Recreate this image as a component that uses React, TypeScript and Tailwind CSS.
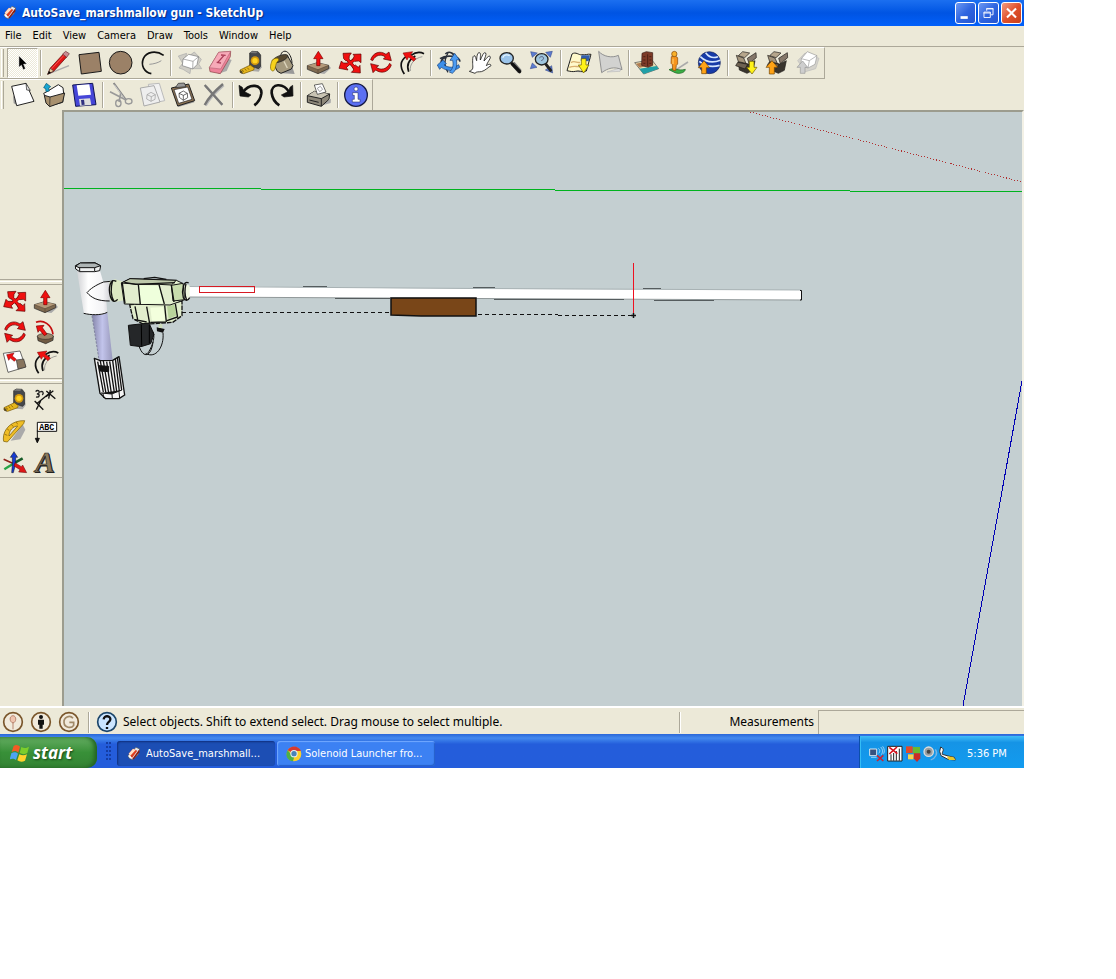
import React from "react";

type Box = { x: number; y: number; children: React.ReactNode };

/* Icons are drawn on a fine grid, three units to the pixel. */
function Glyph({ x, y, children }: Box) {
  return (
    <svg viewBox={`${x} ${y} 93 90`} className="h-[30px] w-[31px]" fill="none" strokeLinejoin="round" aria-hidden="true">
      {children}
    </svg>
  );
}

function Tool({ label, pressed, children }: { label: string; pressed?: boolean; children: React.ReactNode }) {
  return (
    <button
      type="button"
      aria-label={label}
      aria-pressed={pressed}
      className={
        pressed
          ? "flex h-[30px] w-[31px] shrink-0 items-center justify-center border border-t-[#aca899] border-l-[#aca899] border-r-white border-b-white bg-[#f6f5ee] bg-[repeating-conic-gradient(#ffffff_0_25%,#ece9d8_0_50%)] bg-[length:2px_2px]"
          : "h-[30px] w-[31px] shrink-0"
      }
    >
      {children}
    </button>
  );
}

function Sep() {
  return (
    <div className="flex w-[6px] shrink-0 justify-center py-[2px]">
      <div className="w-[2px] border-l border-[#aca899] bg-white" />
    </div>
  );
}

function Grip() {
  return <div className="my-px mr-[3px] ml-px w-[3px] shrink-0 border-l border-white border-r border-r-[#aca899]" />;
}

const red = "#f01010";
const ink = "#1a1a1a";

const MoveShape = ({ dx, dy }: { dx: number; dy: number }) => (
  <g transform={`translate(${dx} ${dy})`}>
    <path d="M-17-18 15 19M19-15-18 12" stroke="#5a0000" strokeWidth="10" />
    <g stroke="#5a0000" strokeWidth="2" fill={red}>
      <path d="M-23-28 2-29-4-20-5-10-15-6-21-12Z" />
      <path d="M31-26 31 0 24-5 13-4 7-12 11-20 7-25Z" />
      <path d="M29 31 2 29 9 22 6 13 14 7 23 14 28 8Z" />
      <path d="M-35 17-28-5-22 1-11 1-7 9-13 14-8 22Z" />
    </g>
    <path d="M-14-15 13 16M16-12-15 10" stroke={red} strokeWidth="7" />
  </g>
);

const RotateShape = ({ dx, dy }: { dx: number; dy: number }) => (
  <g transform={`translate(${dx} ${dy})`} stroke="#5a0000" strokeWidth="2" fill={red}>
    <path d="M-31-7C-24-28-3-36 15-23L24-30 31-4 7-9 13-15C0-25-17-21-25-4Z" />
    <path d="M31 9C24 30 2 37-16 24L-24 32-31 5-7 11-14 16C-1 26 18 22 26 4Z" />
  </g>
);

const OffsetShape = ({ dx, dy }: { dx: number; dy: number }) => (
  <g transform={`translate(${dx} ${dy})`}>
    <path d="M-23 36C-38 14-35-5-17-17M-10 29C-17 10-9-7 10-18M-3-20C12-31 23-32 36-25" stroke="#111" strokeWidth="5" />
    <path d="M-5 27C-8 7 7-12 31-16" stroke="#777" strokeWidth="2" />
    <path d="M-27-27 2-31-4-22 12-10 5-2-10-15-15-6Z" fill={red} stroke="#700" strokeWidth="1.5" />
  </g>
);

const PushShape = ({ dx, dy }: { dx: number; dy: number }) => (
  <g transform={`translate(${dx} ${dy})`}>
    <path d="M0 31 18 34 38 16 30 8Z" fill="#aaa" />
    <path d="M-33 9-3 0 31 8 31 18-1 33-33 20Z" fill="#7f6a50" stroke="#222" strokeWidth="2" />
    <path d="M-33 9-3 0 31 8-1 21Z" fill="#b49a7a" />
    <path d="M-1 21V33M-33 9-1 21 31 8" stroke="#4a3b2a" strokeWidth="1.5" />
    <path d="M0-34 14-12H5V9H-5V-12H-14Z" fill={red} stroke="#700" strokeWidth="2" />
  </g>
);

const TapeShape = ({ dx, dy }: { dx: number; dy: number }) => (
  <g transform={`translate(${dx} ${dy})`}>
    <path d="M4 25 25 27 34 14 31 4Z" fill="#aaa" />
    <path d="M-2-29 6-34 23-33 31-23V11L25 18-2 10Z" fill="#46484c" stroke="#222" strokeWidth="2" />
    <path d="M-2-29 6-34 23-33 17-28Z" fill="#777" />
    <circle cx="14" cy="-6" r="13" fill="#d49a10" />
    <circle cx="14" cy="-6" r="8" fill="#ffd322" />
    <path d="M-31 22 0 7 12 16 10 22-20 33-31 29Z" fill="#e6b61c" stroke="#705000" strokeWidth="2" />
    <path d="M-25 22-19 27M-17 18-12 24M-9 15-4 21" stroke="#634800" strokeWidth="2" />
    <path d="M-31 22-24 26-23 34-31 30Z" fill="#554a2a" />
  </g>
);

const CrateShape = ({ dx, dy }: { dx: number; dy: number }) => (
  <g transform={`translate(${dx} ${dy})`} stroke="#1d1a16" strokeWidth="2">
    <path d="M-24-3 6 4 26-6 20 23 2 32-21 22Z" fill="#39342d" />
    <path d="M-24-3-30-22-8-14-1 2Z" fill="#a3947c" />
    <path d="M-24-21-11-33 10-29-5-15Z" fill="#b6a68c" />
    <path d="M3-13 29-30 30-15 8 3Z" fill="#85776a" />
    <path d="M-26-1-32 9-4 19 4 5Z" fill="#6e6252" />
  </g>
);

const Book = () => (
  <svg viewBox="0 0 48 48" className="h-4 w-4 shrink-0" aria-hidden="true">
    <path d="M6 29 30 4l11 5-5 17-17 15-9-4Z" fill="#e5edf5" stroke="#555" strokeWidth="2" />
    <path d="M8 23 21 8l13 6-16 22Z" fill="#dc3d1e" />
    <path d="M8 23 21 8l8 4-16 17Z" fill="#ffe1c8" />
    <path d="M18 40 40 10v9L24 39Z" fill="#8a1e12" />
    <path d="M8 29l8 7" stroke="#fff" strokeWidth="4" />
  </svg>
);

function TitleBar() {
  const base = "flex h-[22px] w-[21px] items-center justify-center rounded-[3px] border border-white";
  return (
    <header className="flex h-[26px] items-center bg-linear-to-b from-[#1b6ff0] via-[#0054e3] to-[#0260fa] pr-[2px] pl-[2px]">
      <Book />
      <h1 className="ml-[4px] flex-1 truncate font-['DejaVu_Sans_Condensed','DejaVu_Sans',sans-serif] text-[12px] leading-[18px] font-bold text-white [text-shadow:1px_1px_1px_#0b2a80]">
        AutoSave_marshmallow gun - SketchUp
      </h1>
      <div className="flex gap-[2px]">
        <button type="button" aria-label="Minimize" className={base + " bg-linear-to-br from-[#6d98f2] via-[#2f65e0] to-[#2455d0]"}>
          <svg viewBox="0 0 21 21" className="h-5 w-5"><path d="M5 14h8v3H5z" fill="#fff" /></svg>
        </button>
        <button type="button" aria-label="Restore" className={base + " bg-linear-to-br from-[#6d98f2] via-[#2f65e0] to-[#2455d0]"}>
          <svg viewBox="0 0 21 21" className="h-5 w-5" fill="none" stroke="#fff">
            <path d="M8.500 8V5.500h7v7H13M8 6h8" />
            <path d="M5.500 9.500h7v6h-7zM5 10.500h8" />
          </svg>
        </button>
        <button type="button" aria-label="Close" className={base + " bg-linear-to-br from-[#f09a80] via-[#e0512c] to-[#c8401c]"}>
          <svg viewBox="0 0 21 21" className="h-5 w-5"><path d="M5.500 5.500l10 10M15.500 5.500l-10 10" stroke="#fff" strokeWidth="2.300" /></svg>
        </button>
      </div>
    </header>
  );
}

const menus = ["File", "Edit", "View", "Camera", "Draw", "Tools", "Window", "Help"];

function MenuBar() {
  return (
    <nav className="flex h-5 items-center gap-[11px] pl-[5px]">
      {menus.map((m) => (
        <button key={m} type="button" className="font-['DejaVu_Sans_Condensed','DejaVu_Sans',sans-serif] text-[11px] leading-[16px] text-black">
          {m}
        </button>
      ))}
    </nav>
  );
}

function MainToolbar() {
  return (
    <div className="flex">
      <div role="toolbar" aria-label="Getting started" className="flex h-8 border-t border-b border-t-white border-b-[#aca899] border-r border-r-[#aca899]">
        <Grip />
        <Tool label="Select" pressed>
          <Glyph x={21} y={144}><path d="M56 166V203L64 196 70 211 77 207 71 193 82 192Z" fill="#000" stroke="#fff" strokeWidth="1.500" /></Glyph>
        </Tool>
        <Sep />
        <Tool label="Line">
          <Glyph x={132} y={144}>
            <path d="M147 221 207 197" stroke="#aaa" strokeWidth="4" />
            <path d="M143 223 151 204 190 162 200 171 161 214Z" fill="#e01515" stroke="#500" strokeWidth="2" />
            <path d="M154 207 193 165" stroke="#ff7777" strokeWidth="2" />
            <path d="M143 223 151 205 161 213Z" fill="#e6c79c" stroke="#222" strokeWidth="1.500" />
            <path d="M143 223 147 213 153 218Z" fill="#000" />
            <path d="M188 162 197 154 208 161 200 172Z" fill="#c98b92" stroke="#633" strokeWidth="2" />
          </Glyph>
        </Tool>
        <Tool label="Rectangle">
          <Glyph x={225} y={144}><path d="M237 164 297 157 304 214 244 222Z" fill="#9b8167" stroke={ink} strokeWidth="3" /></Glyph>
        </Tool>
        <Tool label="Circle">
          <Glyph x={318} y={144}><circle cx="362" cy="188" r="34" fill="#9b8167" stroke={ink} strokeWidth="3" /></Glyph>
        </Tool>
        <Tool label="Arc">
          <Glyph x={411} y={144}>
            <path d="M491 166C468 150 439 155 430 176 422 196 432 216 454 221" stroke="#111" strokeWidth="5" />
            <path d="M448 193C462 192 475 188 484 182" stroke="#999" strokeWidth="3" />
          </Glyph>
        </Tool>
        <Sep />
        <Tool label="Make Component">
          <Glyph x={522} y={144}>
            <path d="M535 168 560 160 556 176 583 156 604 178 596 192 605 206 572 206 570 221 549 208 537 204 548 190Z" fill="#cfcdc5" stroke="#aaa" strokeWidth="2" />
            <path d="M549 177 566 163 596 170 591 194 578 207 547 197Z" fill="#fff" stroke="#777" strokeWidth="2" />
            <path d="M549 177 579 184 596 170M579 184 578 207" stroke="#888" strokeWidth="2" />
          </Glyph>
        </Tool>
        <Tool label="Eraser">
          <Glyph x={615} y={144}>
            <path d="M653 222 680 213 695 180 680 175Z" fill="#aaa" />
            <path d="M628 203 656 157 692 154 691 170 661 221 630 215Z" fill="#ee8299" stroke="#844" strokeWidth="2" />
            <path d="M628 203 656 157 692 154 662 207Z" fill="#f7aab8" stroke="#a65868" strokeWidth="1.500" />
            <path d="M653 188 672 166M663 165 677 166M650 187 663 189" stroke="#aa3d56" strokeWidth="4" />
          </Glyph>
        </Tool>
        <Tool label="Tape Measure"><Glyph x={708} y={144}><TapeShape dx={751} dy={188} /></Glyph></Tool>
        <Tool label="Paint Bucket">
          <Glyph x={801} y={144}>
            <path d="M835 219 884 222 876 198Z" fill="#999" />
            <path d="M817 184 862 166 879 197 874 207 843 220 832 214Z" fill="#a59a7e" stroke="#222" strokeWidth="3" />
            <path d="M842 170C842 152 858 149 866 160 873 169 876 180 876 190" stroke="#222" strokeWidth="3" />
            <ellipse cx="840" cy="176" rx="25" ry="9" transform="rotate(-22 840 176)" fill="#554832" stroke="#222" strokeWidth="2" />
            <path d="M817 180C829 170 842 175 833 184 824 192 829 213 818 213 808 210 811 193 817 180Z" fill="#f7d21c" stroke="#7d6400" strokeWidth="2" />
            <path d="M852 184 862 204" stroke="#ddd5bd" strokeWidth="4" />
          </Glyph>
        </Tool>
        <Sep />
        <Tool label="Push/Pull"><Glyph x={42} y={12}><PushShape dx={85} dy={56} /></Glyph></Tool>
        <Tool label="Move"><Glyph x={135} y={12}><MoveShape dx={182} dy={56} /></Glyph></Tool>
        <Tool label="Rotate"><Glyph x={228} y={12}><RotateShape dx={273} dy={54} /></Glyph></Tool>
        <Tool label="Offset"><Glyph x={321} y={12}><OffsetShape dx={366} dy={54} /></Glyph></Tool>
        <Sep />
        <Tool label="Orbit">
          <Glyph x={432} y={12}>
            <path d="M466 30C478 18 494 29 497 44M450 44C469 31 508 35 510 53M458 64C449 54 455 41 470 40" stroke="#2a2f39" strokeWidth="5" />
            <path d="M474 27C462 46 462 67 474 85" stroke="#2a2f39" strokeWidth="4" />
            <path d="M442 63 459 48 469 59 462 63C478 73 494 71 506 62L509 70C493 83 470 82 454 70L449 76Z" stroke="#123d79" strokeWidth="2" fill="#3c8ee8" />
            <path d="M494 28 508 47 499 48C503 65 497 81 487 88L478 84C489 75 491 63 488 49L480 49Z" fill="#4d9cf2" stroke="#123d79" strokeWidth="2" />
          </Glyph>
        </Tool>
        <Tool label="Pan">
          <Glyph x={525} y={12}>
            <path d="M538 82C552 77 548 69 548 58 548 48 547 37 552 35 558 35 557 44 560 50 560 39 562 25 568 26 574 26 570 41 571 48 576 39 580 22 587 27 591 31 582 45 582 51 589 44 595 34 600 37 605 41 592 54 589 65 597 59 603 60 603 65 595 69 586 80 574 83 566 84 559 82 555 88Z" fill="#fff" stroke={ink} strokeWidth="2.500" />
          </Glyph>
        </Tool>
        <Tool label="Zoom">
          <Glyph x={618} y={12}>
            <path d="M668 58 690 83" stroke="#777" strokeWidth="14" />
            <path d="M666 59 689 83" stroke="#111" strokeWidth="10" strokeLinecap="round" />
            <ellipse cx="650" cy="43" rx="20" ry="17" fill="#9bc4ea" stroke="#222" strokeWidth="4" />
            <path d="M638 41C642 31 653 31 659 35" stroke="#e3f4ff" strokeWidth="4" />
          </Glyph>
        </Tool>
        <Tool label="Zoom Extents">
          <Glyph x={711} y={12}>
            <g fill="#5b7bd0" stroke="#293d80" strokeWidth="1.500">
              <path d="M722 23 742 27 727 40Z" /><path d="M787 22 767 25 781 40Z" /><path d="M721 74 741 70 727 57Z" /><path d="M766 78 788 87 785 65Z" />
            </g>
            <path d="M768 61 782 79" stroke="#222" strokeWidth="9" strokeLinecap="round" />
            <ellipse cx="755" cy="46" rx="19" ry="17" fill="#9fc6de" stroke="#222" strokeWidth="4" />
            <path d="M748 42C753 34 765 39 759 46L754 51" stroke="#557" strokeWidth="3" />
          </Glyph>
        </Tool>
        <Sep />
        <Tool label="Get Current View">
          <Glyph x={12} y={12}>
            <path d="M31 82 72 86 94 40Z" fill="#bbb" />
            <path d="M36 30C48 22 56 34 65 32 76 34 83 29 93 31L79 81C66 86 57 78 46 82 38 84 30 82 21 80Z" fill="#fff9cb" stroke="#222" strokeWidth="3" />
            <path d="M64 34 90 34 86 52 62 50Z" fill="#315dac" />
            <path d="M33 56C43 48 51 58 60 55M28 70C43 64 54 70 61 67" stroke="#d9b070" strokeWidth="4" />
            <path d="M64 44H78V63H87L71 87 55 63H64Z" fill="#fff219" stroke="#655800" strokeWidth="2" />
          </Glyph>
        </Tool>
        <Tool label="Toggle Terrain">
          <Glyph x={105} y={12}>
            <path d="M141 84 180 82 186 70Z" fill="#ddd" stroke="#bbb" strokeWidth="2" />
            <path d="M116 22C130 38 156 43 175 34L186 77C162 66 143 73 125 86Z" fill="#d2d2d0" stroke="#919191" strokeWidth="3" />
          </Glyph>
        </Tool>
        <Sep />
        <Tool label="Add New Building">
          <Glyph x={216} y={12}>
            <path d="M224 56 275 47 296 74 251 90Z" fill="#eee1b4" stroke="#444" strokeWidth="2" />
            <path d="M238 74 290 66 296 74 251 90Z" fill="#21a0a7" />
            <path d="M228 59 249 55 261 66 239 71Z" fill="#b07c51" />
            <path d="M246 28 259 23 278 26V64L264 70 245 64Z" fill="#7d3b28" stroke="#371a13" strokeWidth="2" />
            <path d="M263 31V66M250 38h6m12 0h6m-24 10h6m12 0h6m-24 10h6m12 0h6" stroke="#4d2014" strokeWidth="3" />
          </Glyph>
        </Tool>
        <Tool label="Photo Textures">
          <Glyph x={309} y={12}>
            <path d="M350 76 384 54" stroke="#aaa" strokeWidth="5" />
            <path d="M327 77C343 69 352 82 376 76 375 87 357 91 345 86Z" fill="#3aae44" stroke="#195d23" strokeWidth="2" />
            <path d="M334 38C342 35 352 37 353 42L353 60 349 64 347 80 338 78 337 62 333 58Z" fill="#f6941e" stroke="#80440a" strokeWidth="2" />
            <circle cx="343" cy="30" r="8" fill="#f9b129" stroke="#80440a" strokeWidth="2" />
            <path d="M339 44V60" stroke="#ffd372" strokeWidth="3" />
          </Glyph>
        </Tool>
        <Tool label="Preview in Google Earth">
          <Glyph x={402} y={12}>
            <circle cx="448" cy="56" r="33" fill="#173ba8" stroke="#172355" strokeWidth="2" />
            <path d="M418 52C437 68 459 70 479 64M421 38C438 55 460 57 481 49M437 26C448 41 461 43 474 38" stroke="#d6e7ff" strokeWidth="5" />
            <path d="M432 50 449 71H439V89H425V71H415Z" fill="#ffa316" stroke="#6e4100" strokeWidth="2" />
          </Glyph>
        </Tool>
        <Sep />
        <Tool label="Get Models">
          <Glyph x={513} y={12}><CrateShape dx={559} dy={56} /><path d="M568 52H582V70H591L576 90 560 70H568Z" fill="#fff219" stroke="#655800" strokeWidth="2" /></Glyph>
        </Tool>
        <Tool label="Share Model">
          <Glyph x={606} y={12}><CrateShape dx={653} dy={56} /><path d="M636 50 653 70H643V90H628V70H618Z" fill="#ffa316" stroke="#6e4100" strokeWidth="2" /></Glyph>
        </Tool>
        <Tool label="Share Component">
          <Glyph x={699} y={12}>
            <path d="M713 50 735 27 777 43 767 74 736 83Z" fill="#d5d3cc" stroke="#bbb" strokeWidth="2" />
            <path d="M724 44 742 23 771 35 765 61 744 72 723 65Z" fill="#fff" stroke="#999" strokeWidth="2" />
            <path d="M724 44 748 50 771 35M748 50 744 72" stroke="#999" strokeWidth="2" />
            <path d="M728 51 743 70H735V88H721V70H711Z" fill="#cecece" stroke="#999" strokeWidth="2" />
          </Glyph>
        </Tool>
      </div>
    </div>
  );
}

function StandardToolbar() {
  return (
    <div className="flex">
      <div role="toolbar" aria-label="Standard" className="flex h-8 border-t border-r border-t-white border-r-[#aca899] pb-px">
        <Grip />
        <Tool label="New">
          <Glyph x={21} y={240}>
            <path d="M39 286 57 317 41 310Z" fill="#999" />
            <path d="M35 259 78 250 102 304 50 317Z" fill="#fff" stroke="#222" strokeWidth="3" />
            <path d="M78 250 80 270 91 271Z" fill="#ddd" stroke="#222" strokeWidth="2" />
          </Glyph>
        </Tool>
        <Tool label="Open">
          <Glyph x={114} y={240}>
            <path d="M131 280 139 276 175 254 189 263 191 281 188 307 147 318Z" fill="#fff" stroke="#222" strokeWidth="3" />
            <path d="M133 286 150 291 194 279 188 306 149 320 138 309Z" fill="#a7906e" stroke="#222" strokeWidth="3" />
            <path d="M150 291 149 319" stroke="#222" strokeWidth="2" />
            <path d="M131 263 139 250 152 260 146 264 148 273 138 275 137 266Z" fill="#17a5d1" stroke="#07506b" strokeWidth="2" />
          </Glyph>
        </Tool>
        <Tool label="Save">
          <Glyph x={207} y={240}>
            <path d="M218 255 278 250 288 314 227 319Z" fill="#4646d8" stroke="#111555" strokeWidth="3" />
            <path d="M230 256 268 253 273 284 235 287Z" fill="#fff" />
            <path d="M237 297 270 295 274 315 240 317Z" fill="#ddd" />
            <path d="M243 300 252 299 254 314 245 315Z" fill="#303080" />
          </Glyph>
        </Tool>
        <Sep />
        <Tool label="Cut">
          <Glyph x={318} y={240}>
            <path d="M341 249 378 300" stroke="#888" strokeWidth="6" />
            <path d="M343 254 374 297" stroke="#eee" strokeWidth="2" />
            <path d="M330 275 378 300M362 280 357 306" stroke="#999" strokeWidth="5" />
            <ellipse cx="386" cy="304" rx="10" ry="8" stroke="#999" strokeWidth="4" />
            <ellipse cx="355" cy="310" rx="8" ry="10" stroke="#999" strokeWidth="4" />
          </Glyph>
        </Tool>
        <Tool label="Copy">
          <Glyph x={411} y={240}>
            <path d="M445 253 478 250 494 302 459 309Z" fill="#f1f1f1" stroke="#bbb" strokeWidth="3" />
            <path d="M421 264 462 257 480 306 432 318Z" fill="#eee" stroke="#aaa" strokeWidth="3" />
            <path d="M441 284 453 277 466 284 465 298 453 304 440 297ZM441 284 454 290 466 284M454 290 453 304" stroke="#999" strokeWidth="2" />
          </Glyph>
        </Tool>
        <Tool label="Paste">
          <Glyph x={504} y={240}>
            <path d="M526 295 535 321 583 307 577 291Z" fill="#999" />
            <path d="M514 264 566 252 584 302 533 318Z" fill="#8b7253" stroke="#222" strokeWidth="3" />
            <path d="M522 269 563 261 576 298 536 310Z" fill="#fff" stroke="#222" strokeWidth="2" />
            <path d="M526 263 535 250 553 249 558 260Z" fill="#999" stroke="#222" strokeWidth="2" />
            <path d="M537 280 550 273 562 280 563 293 550 301 538 292ZM537 280 550 286 562 280M550 286 550 301" stroke="#222" strokeWidth="2" />
          </Glyph>
        </Tool>
        <Tool label="Delete">
          <Glyph x={597} y={240}>
            <path d="M618 259 667 315M671 256C651 273 631 291 617 317" stroke="#bbb" strokeWidth="7" />
            <path d="M614 255 667 314M669 252C648 270 628 288 614 315" stroke="#777" strokeWidth="7" />
          </Glyph>
        </Tool>
        <Sep />
        <Tool label="Undo">
          <Glyph x={708} y={240}>
            <path d="M729 277C748 248 787 253 784 281 782 296 774 308 763 316" stroke="#111" strokeWidth="8" />
            <path d="M717 256 727 262 731 274 753 285 745 291 720 288Z" fill="#111" stroke="#111" strokeWidth="2" />
          </Glyph>
        </Tool>
        <Tool label="Redo">
          <Glyph x={801} y={240}>
            <path d="M868 277C849 246 813 251 815 279 817 296 825 308 838 316" stroke="#111" strokeWidth="8" />
            <path d="M878 256 870 262 866 274 844 285 852 291 879 288Z" fill="#111" stroke="#111" strokeWidth="2" />
          </Glyph>
        </Tool>
        <Sep />
        <Tool label="Print">
          <Glyph x={42} y={108}>
            <path d="M90 186 122 177 123 164Z" fill="#aaa" />
            <path d="M52 155 73 142 119 150 117 166 94 187 52 175Z" fill="#8d8779" stroke="#222" strokeWidth="3" />
            <path d="M53 155 73 142 118 150 94 164Z" fill="#c9c4b4" />
            <path d="M73 123 97 119 108 144 82 151Z" fill="#fff" stroke="#222" strokeWidth="2" />
            <path d="M52 155 94 164 119 150M94 164V186M58 168 86 175" stroke="#222" strokeWidth="3" />
            <path d="M82 133 91 127 98 136 89 143Z" stroke="#777" strokeWidth="2" />
          </Glyph>
        </Tool>
        <Sep />
        <Tool label="Model Info">
          <Glyph x={153} y={108}>
            <circle cx="198" cy="153" r="34" fill="#5c70f2" stroke="#161a44" strokeWidth="4" />
            <circle cx="198" cy="135" r="6" fill="#fff" stroke="#162055" strokeWidth="1.500" />
            <path d="M188 146H204V166H210V174H187V166H193V154H188Z" fill="#fff" stroke="#162055" strokeWidth="1.500" />
          </Glyph>
        </Tool>
      </div>
    </div>
  );
}

function SideGrip() {
  return (
    <div className="h-[6px] shrink-0 border-t border-b border-[#aca899] bg-[#ece9d8] py-px">
      <div className="h-px bg-white" />
    </div>
  );
}

function SideBar() {
  return (
    <aside className="flex w-16 shrink-0 flex-col border-r-2 border-r-[#9c9c8e] pt-[169px]">
      <SideGrip />
      <div role="toolbar" aria-label="Modify" className="grid auto-rows-[31px] grid-cols-2 place-items-center">
        <Tool label="Move copy"><Glyph x={0} y={33}><MoveShape dx={46} dy={78} /></Glyph></Tool>
        <Tool label="Push Pull face"><Glyph x={93} y={33}><PushShape dx={136} dy={80} /></Glyph></Tool>
        <Tool label="Rotate entity"><Glyph x={0} y={126}><RotateShape dx={45} dy={170} /></Glyph></Tool>
        <Tool label="Follow Me">
          <Glyph x={93} y={126}>
            <path d="M112 183 136 175 160 183 159 196 137 206 114 197Z" fill="#705a42" stroke="#222" strokeWidth="2" />
            <ellipse cx="136" cy="184" rx="24" ry="9" fill="#9b8468" stroke="#222" strokeWidth="1.500" />
            <path d="M108 142C129 133 155 147 159 178" stroke="#c40e0e" strokeWidth="5" />
            <path d="M109 153 132 151 127 158 141 177 133 182 119 165 114 172Z" fill={red} stroke="#700" strokeWidth="2" />
          </Glyph>
        </Tool>
        <Tool label="Scale">
          <Glyph x={0} y={219}>
            <path d="M10 235 60 228 77 276 24 292Z" fill="#fff" stroke="#222" strokeWidth="2" />
            <path d="M49 255 71 252 78 276 54 282Z" fill="#87745d" stroke="#333" strokeWidth="2" />
            <path d="M20 239 42 234 37 243 49 253 43 259 31 249 26 256Z" fill={red} stroke="#700" strokeWidth="1.500" />
          </Glyph>
        </Tool>
        <Tool label="Offset edges"><Glyph x={93} y={219}><OffsetShape dx={139} dy={259} /></Glyph></Tool>
      </div>
      <SideGrip />
      <div role="toolbar" aria-label="Construction" className="grid auto-rows-[31px] grid-cols-2 place-items-center border-b border-[#aca899]">
        <Tool label="Tape"><Glyph x={0} y={330}><TapeShape dx={43} dy={376} /></Glyph></Tool>
        <Tool label="Dimension">
          <Glyph x={93} y={330}>
            <path d="M110 386 153 351M104 378 130 404M109 404 122 378M139 348 166 371M151 345 146 371M138 365 160 347" stroke="#111" strokeWidth="4" />
            <path d="M107 350C112 343 120 348 117 354L112 357C120 357 120 368 108 366M120 351C128 347 133 353 127 360" stroke="#222" strokeWidth="4" />
          </Glyph>
        </Tool>
        <Tool label="Protractor">
          <Glyph x={0} y={420}>
            <path d="M32 494 61 490 76 461 68 445Z" fill="#aaa" />
            <path d="M10 489C9 459 36 432 74 434L71 443 22 498 11 496Z" fill="#efbd25" stroke="#705500" strokeWidth="2" />
            <path d="M27 480C27 463 39 451 53 450Z" fill="#e5dfcf" stroke="#705500" strokeWidth="2" />
            <path d="M14 475 22 478M21 458 28 464M34 445 40 452M49 438 53 445" stroke="#805800" strokeWidth="2" />
          </Glyph>
        </Tool>
        <Tool label="Text">
          <Glyph x={93} y={420}>
            <path d="M112 439H170V466H112Z" fill="#fff" stroke="#111" strokeWidth="3" />
            <path d="M112 464V499M106 487 112 500 118 487Z" fill="#111" stroke="#111" strokeWidth="3" />
            <text x="118" y="461" className="fill-black font-['Liberation_Mono',monospace] text-[25px] font-bold">ABC</text>
          </Glyph>
        </Tool>
        <Tool label="Axes">
          <Glyph x={0} y={513}>
            <path d="M41 563 11 550" stroke="#8d1f17" strokeWidth="5" />
            <path d="M41 562 68 547" stroke="#145a26" strokeWidth="8" />
            <path d="M42 562 13 580" stroke="#28a547" strokeWidth="7" />
            <path d="M37 565V544H31L42 527 53 544H47V564L40 590H35Z" fill="#183bd0" stroke="#111" strokeWidth="1.500" />
            <path d="M45 560 64 572 68 567 80 590 56 588 60 581 42 570Z" fill="#df1717" stroke="#511" strokeWidth="1.500" />
          </Glyph>
        </Tool>
        <Tool label="3D Text">
          <Glyph x={93} y={513}>
            <g className="font-['Liberation_Serif',serif] text-[88px] font-bold italic">
              <text x="109" y="591" fill="#222">A</text>
              <text x="106" y="588" fill="#8d7a5c" stroke="#222" strokeWidth="2">A</text>
            </g>
          </Glyph>
        </Tool>
      </div>
    </aside>
  );
}

function Scene() {
  return (
    <main className="min-w-0 flex-1 border-r-2 border-t-2 border-t-[#9c9c8e] border-r-[#f3f1e6] bg-[#c4cfd1]">
      <svg viewBox="64 112 958 594" className="block w-full" fill="none" role="img" aria-label="Marshmallow gun model">
        <g shapeRendering="crispEdges">
          <path d="M64 188.500H261M261 189.500H555M555 190.500H850M850 191.500H1022" stroke="#00b31e" />
          <path d="M750 112 1022 182" stroke="#b03030" strokeDasharray="1 2" />
          <path d="M1022 381 963 706" stroke="#0000b4" />
        </g>
        <path d="M188 286 480 289 801 290V300L480 299 188 297Z" fill="#fff" />
        <path d="M188 286.500 480 288.500 801 290" stroke="#a8b2b4" />
        <path d="M188 297 480 298.500 801 300" stroke="#909899" />
        <path d="M303 286.500h24m146 1h22m148 1h18M335 298.500h55m104 1h130m30 1h60" stroke="#555c5e" shapeRendering="crispEdges" />
        <path d="M800 290.500H801.500V300H800" stroke="#111" />
        <path d="M182 312.500H392M478 314.500H558M558 315.500H632" stroke="#111" strokeDasharray="4 3" shapeRendering="crispEdges" />
        <path d="M391 298H476V316H421L391 315Z" fill="#794618" stroke="#111" strokeWidth="1.500" />
        <rect x="633" y="263" width="1" height="52" fill="#ee1020" />
        <path d="M631 315.500h5M633.500 313v5" stroke="#111" strokeWidth="1.500" />
        <path d="M199.500 286.500h55v6h-55z" stroke="#d71922" shapeRendering="crispEdges" />

        <g transform="translate(64 250) scale(.333333)" strokeLinejoin="round">
          <linearGradient id="tube"><stop stopColor="#8585aa" /><stop offset=".5" stopColor="#c2c4eb" /><stop offset="1" stopColor="#9999bb" /></linearGradient>
          <linearGradient id="pvc"><stop stopColor="#d1d2d5" /><stop offset=".3" stopColor="#fff" /><stop offset=".7" stopColor="#f3f3f5" /><stop offset="1" stopColor="#bcbcc3" /></linearGradient>
          <path d="M84 194 130 188 146 332 105 330Z" fill="url(#tube)" />
          <path d="M84 198 105 330" stroke="#666688" strokeWidth="2" strokeDasharray="7 4" />
          <path d="M91 325 109 332 146 331 165 320 182 435 165 446 125 446 108 430Z" fill="#f4f4f4" stroke="#111" strokeWidth="4" />
          <path d="M101 335 118 426M109 333 126 430M118 333 134 429M128 335 142 429M137 334 151 427M146 332 158 425M154 326 166 424M160 322 173 420" stroke="#111" strokeWidth="4" />
          <path d="M105 347 134 349V365L107 363ZM111 429 143 432 174 420M117 430 119 444M144 432 145 446M165 425 167 444" fill="#111" stroke="#111" strokeWidth="3" />
          <path d="M39 62H108L118 97C133 91 147 93 151 98V151L127 153 130 188 112 195 60 192Z" fill="url(#pvc)" />
          <path d="M119 96 151 93M130 187C111 197 79 195 59 190M119 96C95 105 78 117 69 128 83 143 98 153 137 153" stroke="#111" strokeWidth="3" />
          <path d="M34 47 49 39 93 38 110 48 107 62 92 65H47L35 57Z" fill="#eef0f0" stroke="#111" strokeWidth="3" />
          <path d="M35 48 45 53H92L110 47 93 39H49Z" fill="#aeb5b5" stroke="#111" strokeWidth="3" />
          <path d="M47 53V64M92 53V64" stroke="#111" strokeWidth="3" />
          <path d="M136 96 153 88 181 96V151L151 156 138 150Z" fill="#dce8c2" />
          <path d="M157 94C139 83 132 113 139 139 144 156 152 158 161 148M146 91C140 112 140 137 150 155" stroke="#111" strokeWidth="4" />
          <path d="M197 164 354 154 354 197 326 217 239 223 207 206Z" fill="#e1edcc" stroke="#111" strokeWidth="4" strokeDasharray="14 3" />
          <path d="M259 173 298 171 303 211 264 216Z" fill="#f3ffdd" />
          <path d="M309 169 331 164 338 196 314 207Z" fill="#b9d49b" />
          <path d="M213 169 221 209M248 170 257 221M302 166 307 216M334 161 341 203M213 209 248 216M259 217 306 216M309 212 340 201" stroke="#111" strokeWidth="4" />
          <path d="M172 99 198 86 337 91 358 101 358 151 318 165 181 162Z" fill="#e2edce" stroke="#111" strokeWidth="3" />
          <path d="M172 99 198 86 337 91 322 105 285 103 223 103Z" fill="#bdc8aa" stroke="#111" strokeWidth="3" />
          <path d="M239 86 272 82 307 88" stroke="#111" strokeWidth="4" />
          <path d="M225 106 284 108 297 160 230 162Z" fill="#efffdc" />
          <path d="M322 106 357 100 363 149 327 153Z" fill="#c8dcad" stroke="#111" strokeWidth="3" />
          <path d="M175 99 183 160M223 103 229 164M285 104 301 162M322 105 330 156M181 97 215 103 333 98" stroke="#111" strokeWidth="4" />
          <path d="M359 100 377 107V145L363 151Z" fill="#eff7df" />
          <path d="M374 99C359 89 352 120 358 143 364 155 372 152 377 143M366 101C362 117 362 137 368 150" stroke="#111" strokeWidth="4" />
          <path d="M193 226 255 219 270 253 260 281 231 290 199 286Z" fill="#252729" stroke="#111" strokeWidth="3" />
          <path d="M232 224 233 287M256 225V280" stroke="#000" strokeWidth="3" />
          <path d="M278 232 302 237 297 248 279 244Z" fill="#111" /><path d="M284 222h11v12h-11" fill="#ccdbb9" />
          <path d="M226 291C239 326 261 321 267 276M267 245C276 265 260 298 251 310M245 310C275 328 301 291 297 248" stroke="#111" strokeWidth="3" />
        </g>
      </svg>
    </main>
  );
}

function Badge({ label, children, blue }: { label: string; children: React.ReactNode; blue?: boolean }) {
  return (
    <button type="button" aria-label={label} className="h-[22px] w-[22px] shrink-0">
      <svg viewBox="0 0 66 66" className="h-[22px] w-[22px]" fill="none">
        <circle cx="33" cy="33" r="28" fill={blue ? "#cbe5ff" : "#f1eadc"} stroke={blue ? "#1b4569" : "#79552a"} strokeWidth="5" />
        {children}
      </svg>
    </button>
  );
}

function StatusBar() {
  const font = "font-['Noto_Sans',sans-serif] text-[12px] leading-[16px] text-black";
  return (
    <footer className="flex h-7 items-center border-t-2 border-t-white pt-[2px] pl-[2px]">
      <div className="flex gap-[6px]">
        <Badge label="Geo-location"><path d="M33 34V55M33 14C21 15 22 33 33 36 44 33 44 15 33 14Z" fill="#efc4af" stroke="#b98570" strokeWidth="3" /></Badge>
        <Badge label="Credits"><circle cx="33" cy="18" r="6" fill="#111" /><path d="M24 26H42V41H38V53H28V41H24Z" fill="#111" /></Badge>
        <Badge label="Sign in"><path d="M45 22C35 10 17 20 18 34 19 50 40 54 47 43V34H34" stroke="#a08968" strokeWidth="5" /></Badge>
      </div>
      <div className="mr-[6px] ml-[8px] h-[21px] w-[2px] border-l border-[#aca899] bg-white" />
      <Badge label="Help" blue><path d="M23 25C24 11 45 14 43 26 42 33 33 33 33 42M33 48V54" stroke="#111" strokeWidth="7" /></Badge>
      <p className={font + " ml-[5px] flex-1 truncate"}>Select objects. Shift to extend select. Drag mouse to select multiple.</p>
      <div className="h-[21px] w-[2px] border-l border-[#aca899] bg-white" />
      <label htmlFor="measurements" className={font + " w-[137px] pr-[4px] text-right"}>Measurements</label>
      <input id="measurements" className={font + " h-[24px] w-[206px] border-t border-l border-[#aca899] bg-transparent px-1 outline-none"} />
    </footer>
  );
}

function TaskBar() {
  const font = "font-['DejaVu_Sans_Condensed','DejaVu_Sans',sans-serif] text-[11px] leading-[16px] text-white";
  return (
    <div className="flex h-[34px] items-stretch bg-linear-to-b from-[#2a66d8] from-0% via-[#4489ee] via-12% to-[#245ddb] to-30%">
      <button type="button" className="mt-[3px] flex w-[97px] items-center rounded-r-[10px] bg-linear-to-b from-[#64ad62] via-[#389038] to-[#348334] pl-[10px] shadow-[inset_-3px_0_4px_#226322]">
        <svg viewBox="0 0 60 60" className="h-5 w-5" aria-hidden="true">
          <path d="M11 9C19 3 25 7 30 11L25 29C19 23 13 23 5 27Z" fill="#f35b24" />
          <path d="M34 12C42 16 48 16 57 11L52 30C45 35 37 34 29 30Z" fill="#7ccd2c" />
          <path d="M4 31C12 26 18 28 24 32L18 51C12 46 5 46-1 49Z" fill="#4da4f2" />
          <path d="M28 34C36 38 43 38 51 34L45 53C37 58 29 57 22 52Z" fill="#ffd22c" />
        </svg>
        <span className="ml-[3px] font-['Open_Sans',sans-serif] text-[17px] leading-[24px] font-bold text-white italic [text-shadow:1px_1px_2px_#174517]">start</span>
      </button>
      <div className="my-[8px] mr-[6px] ml-[9px] w-[5px] border-r-2 border-l-2 border-dotted border-[#143da4]" />
      <div className="flex min-w-0 flex-1 gap-[2px] pt-[7px] pb-[2px]">
        <button type="button" className={font + " flex w-[158px] items-center rounded-[3px] bg-[#1c4eb4] pl-[9px] shadow-[inset_1px_1px_2px_#102f7c]"}>
          <Book /><span className="ml-[4px] truncate">AutoSave_marshmall...</span>
        </button>
        <button type="button" className={font + " flex w-[158px] items-center rounded-[3px] bg-[#3c81f3] pl-[9px] shadow-[inset_1px_1px_1px_#73a9ff,inset_-1px_-1px_1px_#255fc9]"}>
          <svg viewBox="0 0 48 48" className="h-4 w-4 shrink-0" aria-hidden="true">
            <circle cx="24" cy="24" r="22" fill="#f9cf2b" />
            <path d="M24 24 5 13C15-4 38-1 45 15H24Z" fill="#d83a2f" />
            <path d="M5 13 24 35 21 46C2 43-3 26 5 13Z" fill="#4daf47" />
            <circle cx="24" cy="23" r="11" fill="#e9f2f4" /><circle cx="24" cy="23" r="8" fill="#4883b8" />
          </svg>
          <span className="ml-[3px] truncate">Solenoid Launcher fro...</span>
        </button>
      </div>
      <div className="mt-[2px] flex w-[165px] items-center border-l border-[#0b4faa] bg-linear-to-b from-[#3fbdf7] from-0% via-[#1594e6] via-20% to-[#129bef] pt-[4px] pl-[9px] shadow-[inset_1px_0_0_#35bdf5]">
        <svg viewBox="90 132 264 54" className="h-[18px] w-[88px]" fill="none" aria-label="Notification icons">
          <path d="M92 144H113V164H92Z" fill="#37527f" stroke="#d8e7f2" strokeWidth="3" /><path d="M96 169H113M118 142c6 5 6 10 1 15M125 138c7 7 7 16 2 23M131 136c6 8 6 16 3 22" stroke="#dbedf7" strokeWidth="2" />
          <path d="M114 163 133 180M133 163 114 180" stroke="#c72534" strokeWidth="5" />
          <path d="M146 136H189V180H146Z" fill="#fff" stroke="#222" strokeWidth="3" /><path d="M156 160V179M164 156V179M172 150V179M181 143V179" stroke="#222" strokeWidth="3" /><path d="M151 139 175 158M174 138 151 159" stroke="#d9101b" strokeWidth="5" />
          <path d="M201 136H221V156H201Z" fill="#e04a2a" /><path d="M222 138H243V158H222Z" fill="#69b832" /><path d="M201 158H220V175H201Z" fill="#277fe4" /><path d="M207 160H224V175H207Z" fill="#f8d44b" /><path d="M225 157H244V172L234 183 224 172Z" fill="#cb2a25" />
          <circle cx="269" cy="152" r="14" fill="#9a9fa1" stroke="#ddd" strokeWidth="4" /><circle cx="269" cy="152" r="6" fill="#444" /><path d="M289 145C298 157 290 171 275 177" stroke="#79b5e4" strokeWidth="4" />
          <path d="M305 138C320 145 308 151 310 160L324 164 346 169 349 177 327 175 306 164 302 151Z" fill="#fff" stroke="#333" strokeWidth="3" /><path d="M323 166 342 168 350 177 330 177Z" fill="#e6c72b" />
        </svg>
        <time className={font + " ml-[10px] whitespace-nowrap"}>5:36 PM</time>
      </div>
    </div>
  );
}

export default function App() {
  return (
    <div className="min-h-screen bg-white">
      <div className="w-full max-w-[1024px] bg-[#ece9d8]">
        <TitleBar />
        <MenuBar />
        <div className="border-t border-[#aca899]">
          <MainToolbar />
          <StandardToolbar />
        </div>
        <div className="-mt-px flex">
          <SideBar />
          <Scene />
        </div>
        <StatusBar />
        <TaskBar />
      </div>
    </div>
  );
}
